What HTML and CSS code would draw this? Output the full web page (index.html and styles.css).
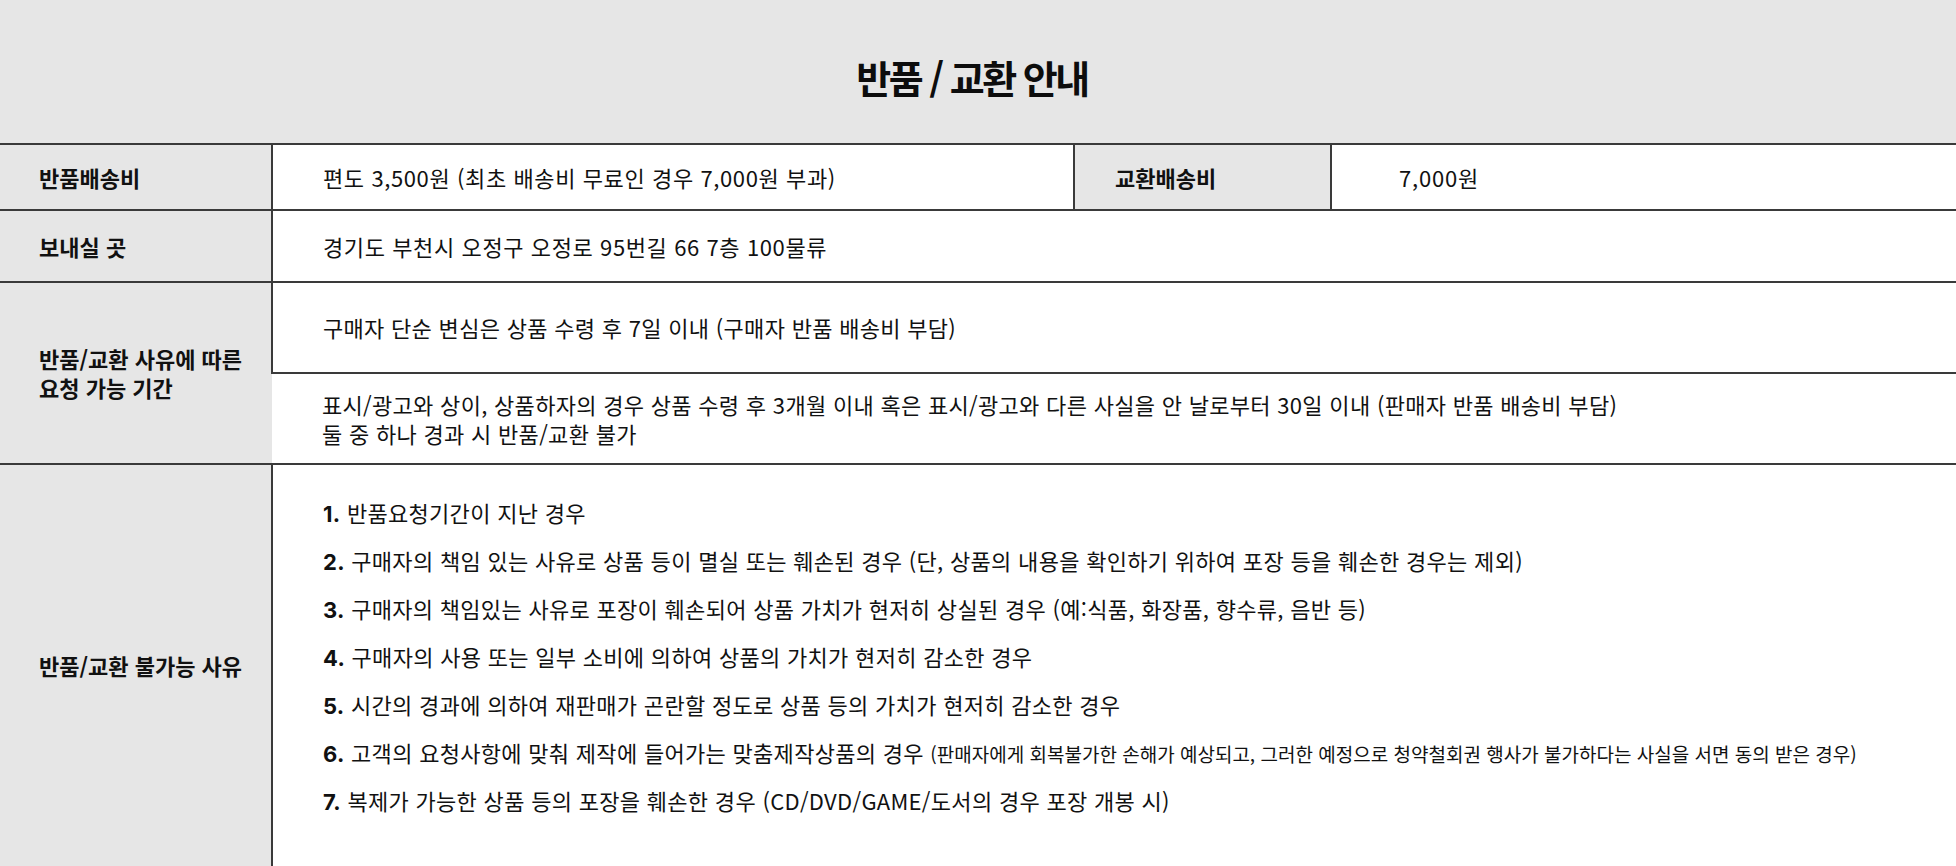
FILE: index.html
```html
<!DOCTYPE html>
<html lang="ko">
<head>
<meta charset="utf-8">
<title>반품 / 교환 안내</title>
<link rel="stylesheet" href="styles.css">
</head>
<body>
<div class="page">
  <header class="head">
    <h1 class="title">반품 / 교환 안내</h1>
  </header>
  <table class="info">
    <colgroup>
      <col class="c1"><col class="c2"><col class="c3"><col class="c4">
    </colgroup>
    <tbody>
      <tr class="r1">
        <th class="label">반품배송비</th>
        <td class="val val-wide">편도 3,500원 (최초 배송비 무료인 경우 7,000원 부과)</td>
        <th class="label label-mid">교환배송비</th>
        <td class="val val-last">7,000원</td>
      </tr>
      <tr class="r2">
        <th class="label">보내실 곳</th>
        <td class="val val-wide" colspan="3">경기도 부천시 오정구 오정로 95번길 66 7층 100물류</td>
      </tr>
      <tr class="r3">
        <th class="label" rowspan="2"><span class="line">반품/교환 사유에 따른</span><span class="line">요청 가능 기간</span></th>
        <td class="val" colspan="3">구매자 단순 변심은 상품 수령 후 7일 이내 (구매자 반품 배송비 부담)</td>
      </tr>
      <tr class="r3">
        <td class="val" colspan="3"><span class="line">표시/광고와 상이, 상품하자의 경우 상품 수령 후 3개월 이내 혹은 표시/광고와 다른 사실을 안 날로부터 30일 이내 (판매자 반품 배송비 부담)</span><span class="line">둘 중 하나 경과 시 반품/교환 불가</span></td>
      </tr>
      <tr class="r4">
        <th class="label">반품/교환 불가능 사유</th>
        <td class="val list-cell" colspan="3">
          <ol class="list">
            <li><span class="num">1.</span> 반품요청기간이 지난 경우</li>
            <li><span class="num">2.</span> 구매자의 책임 있는 사유로 상품 등이 멸실 또는 훼손된 경우 (단, 상품의 내용을 확인하기 위하여 포장 등을 훼손한 경우는 제외)</li>
            <li><span class="num">3.</span> 구매자의 책임있는 사유로 포장이 훼손되어 상품 가치가 현저히 상실된 경우 (예:식품, 화장품, 향수류, 음반 등)</li>
            <li><span class="num">4.</span> 구매자의 사용 또는 일부 소비에 의하여 상품의 가치가 현저히 감소한 경우</li>
            <li><span class="num">5.</span> 시간의 경과에 의하여 재판매가 곤란할 정도로 상품 등의 가치가 현저히 감소한 경우</li>
            <li><span class="num">6.</span> 고객의 요청사항에 맞춰 제작에 들어가는 맞춤제작상품의 경우 <span class="small">(판매자에게 회복불가한 손해가 예상되고, 그러한 예정으로 청약철회권 행사가 불가하다는 사실을 서면 동의 받은 경우)</span></li>
            <li><span class="num">7.</span> 복제가 가능한 상품 등의 포장을 훼손한 경우 (CD/DVD/GAME/도서의 경우 포장 개봉 시)</li>
          </ol>
        </td>
      </tr>
    </tbody>
  </table>
</div>
</body>
</html>
```
FILE: styles.css
```css
* { box-sizing: border-box; }
html, body {
  margin: 0;
  padding: 0;
  background: #ffffff;
}
body {
  font-family: "Noto Sans CJK KR", "Noto Sans", sans-serif;
  color: #111111;
  overflow: hidden;
}
.page {
  width: 1956px;
}
.head {
  height: 143px;
  background: #e6e6e6;
  display: flex;
  align-items: center;
  justify-content: center;
  padding-top: 10px;
  padding-right: 12px;
}
.title {
  margin: 0;
  font-size: 38px;
  font-weight: 700;
  letter-spacing: -2.5px;
  color: #0d0d0d;
}
.info {
  width: 1956px;
  border-collapse: collapse;
  table-layout: fixed;
}
.c1 { width: 272px; }
.c2 { width: 802px; }
.c3 { width: 257px; }
.c4 { width: 625px; }
.info th, .info td {
  border-top: 2px solid #3a3a3a;
  border-bottom: 2px solid #3a3a3a;
  padding: 0;
  vertical-align: middle;
  text-align: left;
}
.info tr > * + * {
  border-left: 2px solid #3a3a3a;
}
.label {
  background: #e6e6e6;
  font-size: 22px;
  font-weight: 700;
  letter-spacing: 0;
  line-height: 29px;
  padding-left: 39px !important;
}
.label-mid {
  padding-left: 40px !important;
}
.val {
  font-size: 22px;
  font-weight: 400;
  letter-spacing: 0.3px;
  line-height: 29px;
  padding-left: 50px !important;
  color: #111111;
}
.val-wide {
  letter-spacing: 0.6px;
}
.line {
  display: block;
}
.val-last {
  padding-left: 67px !important;
  letter-spacing: 0.8px;
}
.r1 > * { height: 66px; }
.r2 > * { height: 72px; }
.r3 > * { height: 91px; }
.r4 > * { height: 403px; }
.list-cell {
  vertical-align: top !important;
  padding-top: 33px !important;
}
.list {
  list-style: none;
  margin: 0;
  padding: 0;
  display: flex;
  flex-direction: column;
  gap: 20px;
}
.list li {
  height: 28px;
  line-height: 28px;
  white-space: nowrap;
}
.num {
  font-family: "Inter", "Liberation Sans", sans-serif;
  font-weight: 700;
  font-size: 22px;
  line-height: 28px;
}
.small {
  font-size: 19px;
  letter-spacing: 0;
}
```
